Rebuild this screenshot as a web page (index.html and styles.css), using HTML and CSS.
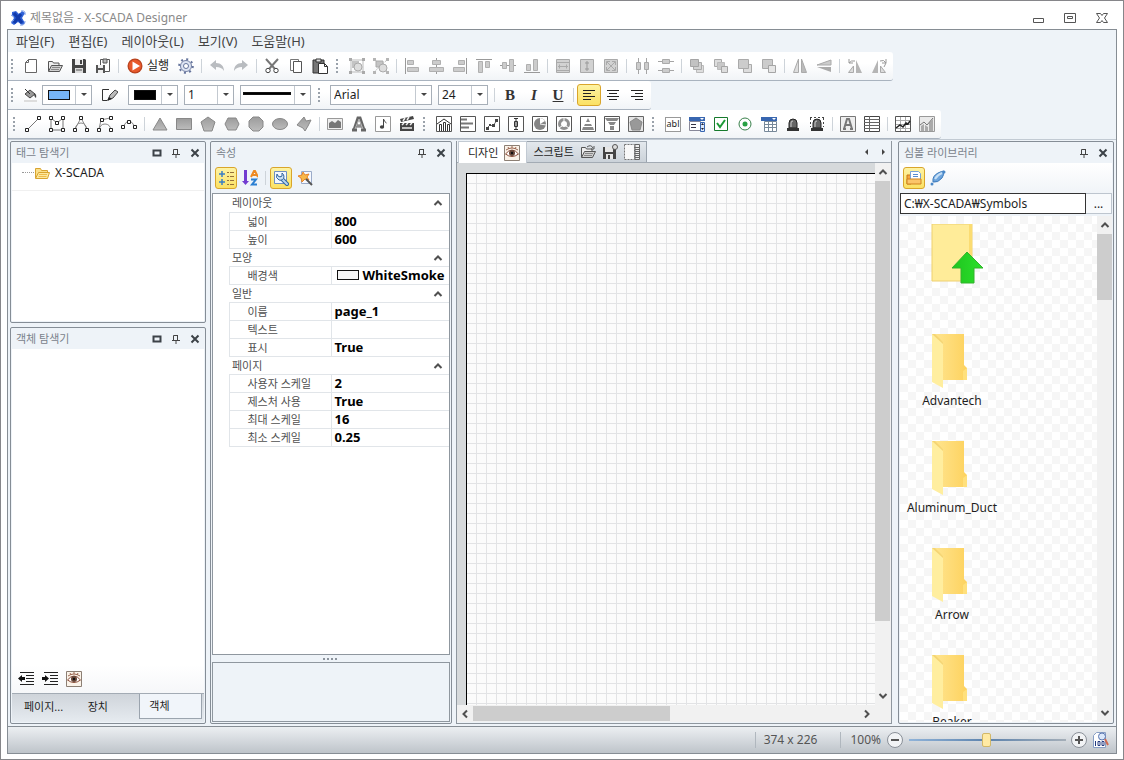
FILE: index.html
```html
<!DOCTYPE html>
<html lang="ko">
<head>
<meta charset="utf-8">
<title>제목없음 - X-SCADA Designer</title>
<link rel="stylesheet" href="styles.css">
</head>
<body>
<svg class="sprite" aria-hidden="true">
<defs>
<linearGradient id="gFold" x1="0" x2="1"><stop offset="0" stop-color="#ffe692"/><stop offset="1" stop-color="#fdd25f"/></linearGradient>
<linearGradient id="gGreen" x1="0" x2="1"><stop offset="0" stop-color="#1fc51f"/><stop offset="1" stop-color="#2ce02c"/></linearGradient>
<linearGradient id="gGray" x1="0" x2="0" y1="0" y2="1"><stop offset="0" stop-color="#9c9c9c"/><stop offset="1" stop-color="#bcbcbc"/></linearGradient>
</defs>
<symbol id="logo" viewBox="0 0 16 16"><path d="M2 2l4-1 3 3 3-3 3 2-3 5 3 5-3 2-4-3-4 3-3-2 3-5-2-3z" fill="#2f62d8"/><path d="M4 3l8 10M11 4l-7 9" stroke="#123bab" stroke-width="3"/><path d="M11 1q5-1 4 4M15 11q0 5-5 4M1 5l3 2M1 12l3-2" fill="none" stroke="#7fa0e8"/></symbol>
<symbol id="new" viewBox="0 0 16 16"><path d="M5.500 1.500h8v13h-11v-10z" fill="#fff" stroke="#666"/><path d="M5.500 1.500v3h-3" fill="none" stroke="#666"/></symbol>
<symbol id="open" viewBox="0 0 16 16"><path d="M1.500 13V3.500h4l1 1.500h5.500v2" fill="#eee" stroke="#555"/><path d="M1.500 13.500l3-6h11l-3 6z" fill="#d0d0d0" stroke="#555"/><path d="M5 9.500h8M4 11.500h8" stroke="#888"/></symbol>
<symbol id="save" viewBox="0 0 16 16"><path d="M1 1h13l1 1v13H1z" fill="#444"/><path d="M4 1h8v6H4z" fill="#eee"/><path d="M9 2h2v4H9z" fill="#444"/><path d="M4 10h8v5H4z" fill="#ddd"/><path d="M5 12h6" stroke="#555"/></symbol>
<symbol id="saveall" viewBox="0 0 16 16"><path d="M5.500 1.500h9v12h-9z" fill="#fff" stroke="#555"/><path d="M8 1h4v4H8z" fill="#bbb" stroke="#555"/><path d="M1 7h9v8H1z" fill="#555"/><path d="M3 7h5v3H3zM3 12h5v3H3z" fill="#eee"/></symbol>
<symbol id="run" viewBox="0 0 16 16"><circle cx="8" cy="8" r="7.500" fill="#b8431f"/><circle cx="8" cy="8" r="6.200" fill="#e8592b"/><path d="M5.500 3.500L13 8l-7.500 4.500z" fill="#fff"/></symbol>
<symbol id="gear" viewBox="0 0 16 16"><circle cx="8" cy="8" r="5.500" fill="#dde4f2" stroke="#7683a6"/><circle cx="8" cy="8" r="6.800" fill="none" stroke="#65749c" stroke-width="2" stroke-dasharray="2 3.340"/><circle cx="8" cy="8" r="2.500" fill="#fff" stroke="#65749c"/></symbol>
<symbol id="undo" viewBox="0 0 16 16"><path d="M1 7l6-5v3c5 0 8 3 8 8-2-3-4-4-8-4v3z" fill="#b9bcc0"/></symbol>
<symbol id="redo" viewBox="0 0 16 16"><path d="M15 7L9 2v3c-5 0-8 3-8 8 2-3 4-4 8-4v3z" fill="#b9bcc0"/></symbol>
<symbol id="cut" viewBox="0 0 16 16"><path d="M2 1l9 10M14 1L5 11" stroke="#777" stroke-width="2"/><circle cx="4" cy="12.500" r="2.200" fill="#fff" stroke="#444"/><circle cx="12" cy="12.500" r="2.200" fill="#fff" stroke="#444"/></symbol>
<symbol id="copy" viewBox="0 0 16 16"><path d="M2.500 1.500h8v11h-8z" fill="#fff" stroke="#777"/><path d="M5.500 3.500h8v11h-8z" fill="#fff" stroke="#555"/></symbol>
<symbol id="paste" viewBox="0 0 16 16"><path d="M1 2h11v13H1z" fill="#777" stroke="#333"/><path d="M4 1h5v3H4z" fill="#ddd" stroke="#333"/><path d="M6.500 5.500h6l3 3v7h-9z" fill="#fff" stroke="#333"/><path d="M12.500 5.500v3h3" fill="none" stroke="#333"/></symbol>
<symbol id="group" viewBox="0 0 16 16"><path d="M2 2h12v12H2z" fill="none" stroke="#bbb"/><path d="M3 3h7v7H3z" fill="#c4c4c4"/><circle cx="9" cy="9" r="4" fill="#ddd" stroke="#aaa"/><path d="M0 0h3v3H0zM13 0h3v3h-3zM0 13h3v3H0zM13 13h3v3h-3z" fill="#aaa"/></symbol>
<symbol id="ungroup" viewBox="0 0 16 16"><path d="M1 1l14 13M1 14L15 1" stroke="#c0c0c0" stroke-dasharray="2 1"/><path d="M3 3h7v6H3z" fill="#c4c4c4" stroke="#aaa"/><circle cx="10" cy="10" r="4" fill="#ddd" stroke="#aaa"/><path d="M0 0h3v3H0zM13 0h3v3h-3zM0 13h3v3H0zM13 13h3v3h-3z" fill="#b5b5b5"/></symbol>
<symbol id="al" viewBox="0 0 16 16"><path d="M1.500 0v16" stroke="#999"/><path d="M3.500 2.500h6v4h-6zM3.500 9.500h11v4h-11z" fill="#ccc" stroke="#b0b0b0"/></symbol>
<symbol id="ac" viewBox="0 0 16 16"><path d="M8.500 0v16" stroke="#999"/><path d="M4.500 2.500h8v4h-8zM1.500 9.500h14v4h-14z" fill="#ccc" stroke="#b0b0b0"/></symbol>
<symbol id="ar" viewBox="0 0 16 16"><path d="M14.500 0v16" stroke="#999"/><path d="M6.500 2.500h6v4h-6zM1.500 9.500h11v4h-11z" fill="#ccc" stroke="#b0b0b0"/></symbol>
<symbol id="at" viewBox="0 0 16 16"><path d="M0 1.500h16" stroke="#999"/><path d="M2.500 3.500h4v11h-4zM9.500 3.500h4v6h-4z" fill="#ccc" stroke="#b0b0b0"/></symbol>
<symbol id="am" viewBox="0 0 16 16"><path d="M0 7.500h16" stroke="#999"/><path d="M2.500 4.500h4v6h-4zM9.500 1.500h4v12h-4z" fill="#ccc" stroke="#b0b0b0"/></symbol>
<symbol id="ab" viewBox="0 0 16 16"><path d="M0 14.500h16" stroke="#999"/><path d="M2.500 6.500h4v6h-4zM9.500 1.500h4v11h-4z" fill="#ccc" stroke="#b0b0b0"/></symbol>
<symbol id="sw" viewBox="0 0 16 16"><path d="M1.500 1.500h13v13h-13z" fill="#d2d2d2" stroke="#aaa"/><path d="M3 8.500h10M4.500 6.500v4M11.500 6.500v4M2 4.500h12M2 12.500h12" stroke="#aaa"/></symbol>
<symbol id="sh" viewBox="0 0 16 16"><path d="M1.500 1.500h13v13h-13z" fill="#d2d2d2" stroke="#aaa"/><path d="M8 3v10M6 5h4M6 11h4" stroke="#999"/></symbol>
<symbol id="sb" viewBox="0 0 16 16"><path d="M1.500 1.500h13v13h-13z" fill="#d2d2d2" stroke="#aaa"/><path d="M4 4l8 8M12 4l-8 8M3.500 7V3.500H7M9 3.500h3.500V7M3.500 9v3.500H7M12.500 9v3.500H9" fill="none" stroke="#aaa"/></symbol>
<symbol id="dh" viewBox="0 0 16 16"><path d="M4.500 0v16M12.500 0v16" stroke="#a5a5a5"/><path d="M2.500 4.500h4v7h-4zM10.500 4.500h4v7h-4z" fill="#ccc" stroke="#aaa"/></symbol>
<symbol id="dv" viewBox="0 0 16 16"><path d="M0 3.500h16M0 12.500h16" stroke="#a5a5a5"/><path d="M4.500 1.500h7v4h-7zM4.500 10.500h7v4h-7z" fill="#ccc" stroke="#aaa"/></symbol>
<symbol id="front" viewBox="0 0 16 16"><path d="M7.500 7.500h7v7h-7z" fill="#ddd" stroke="#bbb"/><path d="M4.500 4.500h8v7h-8z" fill="#d2d2d2" stroke="#aaa"/><path d="M1.500 1.500h8v7h-8z" fill="#c2c2c2" stroke="#a5a5a5"/></symbol>
<symbol id="back" viewBox="0 0 16 16"><path d="M1.500 1.500h7v7h-7z" fill="#ddd" stroke="#aaa"/><path d="M4.500 4.500h7v7h-7z" fill="#c8c8c8" stroke="#bbb"/><path d="M8.500 8.500h6v6h-6z" fill="#ddd" stroke="#a5a5a5"/></symbol>
<symbol id="fwd" viewBox="0 0 16 16"><path d="M6.500 6.500h8v8h-8z" fill="#ddd" stroke="#aaa"/><path d="M1.500 1.500h10v9h-10z" fill="#ccc" stroke="#aaa"/></symbol>
<symbol id="bwd" viewBox="0 0 16 16"><path d="M1.500 1.500h10v9h-10z" fill="#ccc" stroke="#aaa"/><path d="M7.500 7.500h7v7h-7z" fill="#e6e6e6" stroke="#a5a5a5"/></symbol>
<symbol id="fliph" viewBox="0 0 16 16"><path d="M6.500 1v13.500h-5z" fill="#ddd" stroke="#aaa"/><path d="M9.500 1v13.500h5z" fill="#bbb" stroke="#aaa"/></symbol>
<symbol id="flipv" viewBox="0 0 16 16"><path d="M15 2v5H1z" fill="#ccc" stroke="#aaa"/><path d="M15 14V9H1z" fill="#aaa"/></symbol>
<symbol id="rotl" viewBox="0 0 16 16"><path d="M1.500 14.500h5V8z" fill="#ddd" stroke="#aaa"/><path d="M9 15V2l6 13z" fill="#b5b5b5"/><path d="M2 5q2-3 6-2M2 1v4h4" fill="none" stroke="#999"/></symbol>
<symbol id="rotr" viewBox="0 0 16 16"><path d="M1 15L7 2v13z" fill="#b5b5b5"/><path d="M9.500 8v6.500h5z" fill="#ddd" stroke="#aaa"/><path d="M9 3q4-2 6 2l-2 4M15 1v4h-4" fill="none" stroke="#999"/></symbol>
<symbol id="fill" viewBox="0 0 16 16"><path d="M3 7l5-4 5 4-5 4z" fill="#999" stroke="#444"/><path d="M3 2l5 5" stroke="#333"/><path d="M12 6q3 1 2 5-2-1-2-5z" fill="#444"/><path d="M2 14h13" stroke="#ddd" stroke-width="2"/></symbol>
<symbol id="pen" viewBox="0 0 16 16"><path d="M7 2.500H.500v11H5" fill="none" stroke="#333"/><path d="M6 13l2-5 5-5 3 2-5 6z" fill="#bbb" stroke="#444"/><path d="M5 14l2-4 3 2z" fill="#222"/></symbol>
<symbol id="left" viewBox="0 0 16 16"><path d="M2 3.500h12M2 6.500h8M2 9.500h12M2 12.500h8" stroke="#222"/></symbol>
<symbol id="center" viewBox="0 0 16 16"><path d="M2 3.500h12M4 6.500h8M2 9.500h12M4 12.500h8" stroke="#222"/></symbol>
<symbol id="right" viewBox="0 0 16 16"><path d="M2 3.500h12M6 6.500h8M2 9.500h12M6 12.500h8" stroke="#222"/></symbol>
<symbol id="line" viewBox="0 0 16 16"><path d="M2 14L14 2" stroke="#777"/><path d="M.500 12.500h3v3h-3zM12.500.500h3v3h-3z" fill="#fff" stroke="#222"/></symbol>
<symbol id="poly" viewBox="0 0 16 16"><path d="M2 2l6 5 6-5v12H2z" fill="none" stroke="#777"/><path d="M.500.500h3v3h-3zM12.500.500h3v3h-3zM.500 12.500h3v3h-3zM12.500 12.500h3v3h-3zM6.500 5.500h3v3h-3z" fill="#fff" stroke="#222"/></symbol>
<symbol id="curve" viewBox="0 0 16 16"><path d="M2 14Q3 7 8 7t6 7M8 2L2 13M8 2l6 11" fill="none" stroke="#888"/><path d="M.500 12.500h3v3h-3zM12.500 12.500h3v3h-3zM6.500.500h3v3h-3z" fill="#fff" stroke="#222"/></symbol>
<symbol id="bez" viewBox="0 0 16 16"><path d="M2 14Q3 8 8 8t6 6M4 4l9-2M4 4L2 13" fill="none" stroke="#888"/><path d="M.500 12.500h3v3h-3zM12.500 12.500h3v3h-3zM12.500.500h3v3h-3zM3.500 2.500h3v3h-3z" fill="#fff" stroke="#222"/></symbol>
<symbol id="arc" viewBox="0 0 16 16"><path d="M2 11q6-12 12 0" fill="none" stroke="#888"/><path d="M.500 9.500h3v3h-3zM12.500 9.500h3v3h-3zM6.500 4.500h3v3h-3z" fill="#fff" stroke="#222"/></symbol>
<symbol id="tri" viewBox="0 0 16 16"><path d="M8 2l7 12H1z" fill="url(#gGray)" stroke="#888"/></symbol>
<symbol id="rect" viewBox="0 0 16 16"><path d="M.500 2.500h15v11H.500z" fill="url(#gGray)" stroke="#888"/></symbol>
<symbol id="pent" viewBox="0 0 16 16"><path d="M8 1l7 5-3 9H4L1 6z" fill="url(#gGray)" stroke="#888"/></symbol>
<symbol id="hex" viewBox="0 0 16 16"><path d="M4 2h8l3 6-3 6H4L1 8z" fill="url(#gGray)" stroke="#888"/></symbol>
<symbol id="oct" viewBox="0 0 16 16"><path d="M5 1h6l4 4v6l-4 4H5l-4-4V5z" fill="url(#gGray)" stroke="#888"/></symbol>
<symbol id="ell" viewBox="0 0 16 16"><ellipse cx="8" cy="8" rx="7.500" ry="5.500" fill="url(#gGray)" stroke="#888"/></symbol>
<symbol id="free" viewBox="0 0 16 16"><path d="M1 9l7-8 2 4 5-1-3 6-3 5-2-3z" fill="url(#gGray)" stroke="#888"/></symbol>
<symbol id="img" viewBox="0 0 16 16"><path d="M.500 2.500h15v11H.500z" fill="#eee" stroke="#999"/><path d="M2 12V7l3-2 3 2 3-3 3 2v6z" fill="#777"/></symbol>
<symbol id="letter" viewBox="0 0 16 16"><path d="M1 14h5M10 14h5M3 14L7 2h2l4 12M5 10h6" fill="none" stroke="#666" stroke-width="3"/><path d="M4 13L8 3l4 10M6 10h5" fill="none" stroke="#b5b5b5"/></symbol>
<symbol id="note" viewBox="0 0 16 16"><path d="M.500.500h15v15H.500z" fill="#fff" stroke="#999"/><ellipse cx="7" cy="11" rx="2.200" ry="1.700" fill="#444"/><path d="M8.500 11V3q1 3 3 4" fill="none" stroke="#444"/></symbol>
<symbol id="clap" viewBox="0 0 16 16"><path d="M1 7h14v8H1zM1 3l13-3 1 3L2 6z" fill="#444"/><path d="M3 9l2-2M7 9l2-2M11 9l2-2M4 5l2-3M8 4l2-3M3 12h10" stroke="#eee" stroke-width="1.500"/></symbol>
<symbol id="frame" viewBox="0 0 16 16"><path d="M.500.500h15v15H.500z" fill="#fff" stroke="#555"/></symbol>
<symbol id="c1" viewBox="0 0 16 16"><use href="#frame"/><path d="M3.500 15V8.500h2V15M7.500 15V6.500h2V15M11.500 15V8.500h2V15M1 8l7-5 7 5" fill="none" stroke="#333"/></symbol>
<symbol id="c2" viewBox="0 0 16 16"><use href="#frame"/><path d="M1 3.500h6M1 7.500h12M1 11.500h8" stroke="#777" stroke-width="2"/></symbol>
<symbol id="c3" viewBox="0 0 16 16"><use href="#frame"/><path d="M3 12l3-3 3 1 4-6" fill="none" stroke="#666"/><path d="M2 11h3v3H2zM5 8h2v2H5zM8 8h3v3H8zM11 3h3v3h-3z" fill="#444"/></symbol>
<symbol id="c4" viewBox="0 0 16 16"><use href="#frame"/><path d="M8 2v12M6 2.500h4M6 13.500h4" stroke="#333"/><path d="M6.500 5.500h3v5h-3z" fill="#999" stroke="#333"/></symbol>
<symbol id="c5" viewBox="0 0 16 16"><use href="#frame"/><circle cx="8" cy="8" r="6" fill="#858585"/><path d="M8 8V2a6 6 0 0 1 5 3z" fill="#fff"/><path d="M8 8l6 1" stroke="#eee"/></symbol>
<symbol id="c6" viewBox="0 0 16 16"><use href="#frame"/><circle cx="8" cy="8" r="4.500" fill="none" stroke="#909090" stroke-width="3"/><path d="M8 1v4M3 12l3-2M13 12l-3-2" stroke="#fff"/></symbol>
<symbol id="c7" viewBox="0 0 16 16"><use href="#frame"/><path d="M8 2l2 4H6zM5 8h6l1 2H4zM3 11h10l1 3H2z" fill="#888"/></symbol>
<symbol id="c8" viewBox="0 0 16 16"><use href="#frame"/><path d="M1 2h14l-2 3H3zM4 6h8l-2 3H6zM6 10h4v4H6z" fill="#888"/></symbol>
<symbol id="c9" viewBox="0 0 16 16"><path d="M.500.500h15v15H.500z" fill="#e6e6e6" stroke="#666"/><path d="M8 2l6 4-2 8H4L2 6z" fill="#999" stroke="#888"/></symbol>
<symbol id="combo" viewBox="0 0 16 16"><path d="M0 1h16v4H0z" fill="#3866b0"/><path d="M11 2h4l-2 2z" fill="#fff"/><path d="M.500 5.500h11v9H.500z" fill="#fff" stroke="#889"/><path d="M2 8.500h5M2 11.500h5" stroke="#334"/><path d="M11.500 6.500h4v9h-4z" fill="#dce8fa" stroke="#3866b0"/><path d="M12 9l1.500-2L15 9zM12 12l1.500 2 1.500-2z" fill="#223"/></symbol>
<symbol id="check" viewBox="0 0 16 16"><path d="M1.500 1.500h13v13h-13z" fill="#fff" stroke="#167a2c"/><path d="M4 7l3 4 5-7" fill="none" stroke="#1b9a36" stroke-width="2"/></symbol>
<symbol id="radio" viewBox="0 0 16 16"><circle cx="8" cy="8" r="6" fill="#fff" stroke="#38804a"/><circle cx="8" cy="8" r="2.500" fill="#27a143"/></symbol>
<symbol id="cal" viewBox="0 0 16 16"><path d="M0 1h16v4H0z" fill="#3866b0"/><path d="M11 2h4l-2 2z" fill="#fff"/><path d="M3.500 5.500h12v10h-12z" fill="#fff" stroke="#789"/><path d="M4 8.500h11M4 11.500h11M7.500 6v9M11.500 6v9" stroke="#789"/></symbol>
<symbol id="alarm" viewBox="0 0 16 16"><path d="M4 12V7q0-4 4-4t4 4v5z" fill="#666" stroke="#222"/><path d="M6 11V7q0-2 2-2" fill="none" stroke="#ccc"/><path d="M2 12h12v3H2z" fill="#333"/></symbol>
<symbol id="alarm2" viewBox="0 0 16 16"><use href="#alarm"/><path d="M1 1.500h14M1.500 2v9M14.500 2v9" stroke="#444" stroke-dasharray="2 2"/></symbol>
<symbol id="aframe" viewBox="0 0 16 16"><path d="M.500.500h15v15H.500z" fill="#eee" stroke="#777"/><path d="M4 13L7 3h2l3 10M5 9h6M3 13h3M10 13h3" fill="none" stroke="#777" stroke-width="2"/></symbol>
<symbol id="table" viewBox="0 0 16 16"><path d="M.500.500h15v15H.500z" fill="#fff" stroke="#444"/><path d="M0 3.500h16M0 6.500h16M0 9.500h16M0 12.500h16M5.500 0v16" stroke="#666"/></symbol>
<symbol id="trend" viewBox="0 0 16 16"><use href="#frame"/><path d="M1 4.500h14M1 8.500h14M1 12.500h14M5.500 1v14M10.500 1v14" stroke="#aaa"/><path d="M1 12l4-3 3 2 3-4 2 1 2-3" fill="none" stroke="#222" stroke-width="1.500"/></symbol>
<symbol id="trend2" viewBox="0 0 16 16"><path d="M.500.500h15v15H.500z" fill="#eaeaea" stroke="#999"/><path d="M2 15v-5l3-2v7zM6 15V9l3 2v4zM10 15V7l4-4v12z" fill="#aaa"/><path d="M1 9l4-3 3 3 6-7" fill="none" stroke="#777"/></symbol>
<symbol id="max" viewBox="0 0 10 10"><path d="M1.500 2.500h7v5h-7z" fill="none" stroke="#3c4248" stroke-width="2"/></symbol>
<symbol id="pin" viewBox="0 0 10 10"><path d="M1 6.500h8M2.500 6V1.500h4V6M5 7v3" fill="none" stroke="#444"/><path d="M6 1h1v5H6z" fill="#444"/></symbol>
<symbol id="close" viewBox="0 0 10 10"><path d="M1.500 1.500l7 7M8.500 1.500l-7 7" stroke="#3c4248" stroke-width="2"/></symbol>
<symbol id="fold16" viewBox="0 0 16 16"><path d="M1.500 13V3.500h5l1 2h6V8" fill="#fbe08a" stroke="#d8a431"/><path d="M1.500 13.500l3-6h11l-2 6z" fill="#fde9a0" stroke="#d8a431"/><path d="M5 9.500h8M4.500 11.500h8" stroke="#eebc4c"/></symbol>
<symbol id="cat" viewBox="0 0 16 16"><path d="M1 4h6M4 1v6M1 12h6M4 9v6" stroke="#3a7fc4" stroke-width="1.500"/><path d="M9 2.500h2M9 6.500h2M9 10.500h2M9 14.500h2M12 2.500h4M12 6.500h4M12 10.500h4M12 14.500h4" stroke="#96703a"/></symbol>
<symbol id="az" viewBox="0 0 16 16"><path d="M2 0h3v11h2l-3.500 4L0 11h2z" fill="#713bd0"/><path d="M9 7l3-6h1l3 6M10 5h5" fill="none" stroke="#ee8a24" stroke-width="2"/><path d="M9 9.500h5l-4 5h5" fill="none" stroke="#2b7fd2" stroke-width="2"/></symbol>
<symbol id="wrench" viewBox="0 0 16 16"><path d="M1.500 1.500h12v12h-12z" fill="#f4f8ff" stroke="#7090c0"/><path d="M8 8l6 6" stroke="#34679e" stroke-width="4" stroke-linecap="round"/><path d="M8 8l6 6" stroke="#b8d4f0" stroke-width="2" stroke-linecap="round"/><path d="M4 4q-2 4 2 6 4 1 5-3 0-3-2-4v3l-2 1-2-1z" fill="#cce1f6" stroke="#34679e"/></symbol>
<symbol id="star" viewBox="0 0 16 16"><path d="M4.500 1.500h10v12h-10z" fill="#f6f9ff" stroke="#9babc9"/><path d="M6 2l2 3 4-1-2 3 2 3-4-1-3 3-1-4-3-2 4-1z" fill="#f8b84a" stroke="#e8842a"/><path d="M9 9l6 6" stroke="#555" stroke-width="2"/></symbol>
<symbol id="eye" viewBox="0 0 16 16"><path d="M.500.500h15v15H.500z" fill="#fbf3e9" stroke="#8c7f74"/><path d="M1.500 9Q8 1 14.500 9 8 14 1.500 9z" fill="#fff" stroke="#8a4b36"/><circle cx="8" cy="8" r="3" fill="#674638"/><circle cx="8" cy="8" r="1.200" fill="#111"/><path d="M2 5q6-4 12 0M4 2l1 2M8 1v2M12 2l-1 2" fill="none" stroke="#9b6650"/></symbol>
<symbol id="openx" viewBox="0 0 16 16"><use href="#open"/><path d="M7 3q4-3 6 1M14 2v3h-3" fill="none" stroke="#555"/></symbol>
<symbol id="savex" viewBox="0 0 16 16"><path d="M1 3h13v12H1z" fill="#444"/><path d="M3 3h8v5H3zM4 10h7v5H4z" fill="#e6e6e6"/><path d="M6 11h2v4H6z" fill="#444"/><circle cx="13" cy="3" r="2.500" fill="#ddd" stroke="#555"/></symbol>
<symbol id="ruler" viewBox="0 0 16 16"><path d="M.500.500h10v15H.500z" fill="#f8f8f8" stroke="#777" stroke-dasharray="2 1"/><path d="M11 .500h4.500v15H11z" fill="#eee" stroke="#666"/><path d="M11 3.500h4M11 5.500h4M11 7.500h4M11 9.500h4M11 11.500h4M11 13.500h4" stroke="#666"/></symbol>
<symbol id="indl" viewBox="0 0 16 16"><path d="M2 1.500h14M8 4.500h8M8 7.500h8M8 10.500h8M2 13.500h14" stroke="#222"/><path d="M0 7.500L4 4v2h3v3H4v2z" fill="#111"/></symbol>
<symbol id="indr" viewBox="0 0 16 16"><path d="M2 1.500h14M8 4.500h8M8 7.500h8M8 10.500h8M2 13.500h14" stroke="#222"/><path d="M7 7.500L3 4v2H0v3h3v2z" fill="#111"/></symbol>
<symbol id="lib" viewBox="0 0 16 16"><path d="M1 5h4v9H1z" fill="#f5a440" stroke="#c87915"/><path d="M4.500 1.500h8l2 2v8h-10z" fill="#fff" stroke="#79a2d8"/><path d="M7 4.500h5M7 6.500h5" stroke="#568bd0"/><path d="M1 9h14v5H1z" fill="#fbc56a" stroke="#cf831e"/></symbol>
<symbol id="shape" viewBox="0 0 16 16"><path d="M3 12Q2 6 8 3q4-2 6-2 0 4-2 7-4 5-9 4z" fill="#6da4dc" stroke="#3f7dbd"/><path d="M5 9q2-4 7-6" fill="none" stroke="#c5dff6" stroke-width="2"/><circle cx="2" cy="14" r="1.500" fill="#4a88c8"/><circle cx="14" cy="2" r="1.500" fill="#4a88c8"/></symbol>
<symbol id="minus" viewBox="0 0 18 18"><circle cx="9" cy="9" r="7.500" fill="#f1f3f5" stroke="#8a9098"/><path d="M5 9h8" stroke="#555" stroke-width="2"/></symbol>
<symbol id="plus" viewBox="0 0 18 18"><circle cx="9" cy="9" r="7.500" fill="#f1f3f5" stroke="#8a9098"/><path d="M5 9h8M9 5v8" stroke="#555" stroke-width="2"/></symbol>
<symbol id="z100" viewBox="0 0 16 16"><path d="M.500 3.500l3-3h9v15H.500z" fill="#fff" stroke="#889fc4"/><circle cx="9" cy="4.500" r="3.500" fill="#dbe8fa" stroke="#5976b0"/><path d="M12 7l3 6" stroke="#d06a50" stroke-width="2"/><path d="M2.500 9v5M5 9.500h2v4H5zM9 9.500h2v4H9z" fill="none" stroke="#223a80"/></symbol>
<symbol id="up" viewBox="0 0 10 10"><path d="M1.500 7L5 3.500 8.500 7" fill="none" stroke="#505050" stroke-width="2"/></symbol>
<symbol id="down" viewBox="0 0 10 10"><path d="M1.500 3L5 6.500 8.500 3" fill="none" stroke="#505050" stroke-width="2"/></symbol>
<symbol id="lt" viewBox="0 0 10 10"><path d="M7 1.500L3.500 5 7 8.500" fill="none" stroke="#505050" stroke-width="2"/></symbol>
<symbol id="gt" viewBox="0 0 10 10"><path d="M3 1.500L6.500 5 3 8.500" fill="none" stroke="#505050" stroke-width="2"/></symbol>
<symbol id="tl" viewBox="0 0 10 10"><path d="M6 2v6L3 5z" fill="#444"/></symbol>
<symbol id="tr" viewBox="0 0 10 10"><path d="M4 2v6l3-3z" fill="#444"/></symbol>
<symbol id="folder" viewBox="0 0 38 56"><path d="M1 1h32v31l3 3v12H1z" fill="url(#gFold)"/><path d="M36 35l-4 3v9h4z" fill="#ffe07c"/><path d="M1 1l11 8v46L1 49z" fill="#ffee9f"/><path d="M1 1h3l8 8v2z" fill="#f5d574"/></symbol>
<symbol id="upfolder" viewBox="0 0 54 60"><path d="M1 0h40v57H1z" fill="#ffec99" stroke="#eed070"/><path d="M38 0h3v57h-3z" fill="#fbdc72"/><path d="M36 28l16 16h-9v15H30V44h-9z" fill="url(#gGreen)" stroke="#33b32c"/></symbol>
<symbol id="wmin" viewBox="0 0 12 12"><path d="M1.500 6.500h10v4h-10z" fill="#fff" stroke="#555"/></symbol>
<symbol id="wmax" viewBox="0 0 12 12"><path d="M.500 1.500h11v9H.500z" fill="#fff" stroke="#555"/><path d="M3.500 4.500h5v2h-5z" fill="#fff" stroke="#555"/></symbol>
<symbol id="wclose" viewBox="0 0 12 12"><path d="M.500 1.500h4L6 3.500l1.500-2h4L8.500 6l3 4.500h-4L6 8.500l-1.500 2h-4l3-4.500z" fill="#fff" stroke="#555"/></symbol>
</svg>

<div class="window">
<header class="titlebar">
<svg class="i16"><use href="#logo"/></svg>
<h1>제목없음 - X-SCADA Designer</h1>
<div class="window-buttons">
<button aria-label="최소화"><svg><use href="#wmin"/></svg></button>
<button aria-label="최대화"><svg><use href="#wmax"/></svg></button>
<button aria-label="닫기"><svg><use href="#wclose"/></svg></button>
</div>
</header>

<div class="app">
<nav class="menu"><button>파일(F)</button><button>편집(E)</button><button>레이아웃(L)</button><button>보기(V)</button><button>도움말(H)</button></nav>

<div class="toolbar" role="toolbar" aria-label="표준">
<i class="grip"></i>
<button aria-label="새로 만들기"><svg><use href="#new"/></svg></button><button aria-label="열기"><svg><use href="#open"/></svg></button><button aria-label="저장"><svg><use href="#save"/></svg></button><button aria-label="모두 저장"><svg><use href="#saveall"/></svg></button>
<i class="sep"></i>
<button class="run"><svg><use href="#run"/></svg>실행</button><button aria-label="설정"><svg><use href="#gear"/></svg></button>
<i class="sep"></i>
<button aria-label="실행 취소"><svg><use href="#undo"/></svg></button><button aria-label="다시 실행"><svg><use href="#redo"/></svg></button>
<i class="sep"></i>
<button aria-label="잘라내기"><svg><use href="#cut"/></svg></button><button aria-label="복사"><svg><use href="#copy"/></svg></button><button aria-label="붙여넣기"><svg><use href="#paste"/></svg></button>
<i class="grip"></i>
<button aria-label="그룹"><svg><use href="#group"/></svg></button><button aria-label="그룹 해제"><svg><use href="#ungroup"/></svg></button>
<i class="sep"></i>
<button aria-label="왼쪽 맞춤"><svg><use href="#al"/></svg></button><button aria-label="가운데 맞춤"><svg><use href="#ac"/></svg></button><button aria-label="오른쪽 맞춤"><svg><use href="#ar"/></svg></button><button aria-label="위쪽 맞춤"><svg><use href="#at"/></svg></button><button aria-label="중간 맞춤"><svg><use href="#am"/></svg></button><button aria-label="아래쪽 맞춤"><svg><use href="#ab"/></svg></button>
<i class="sep"></i>
<button aria-label="같은 너비"><svg><use href="#sw"/></svg></button><button aria-label="같은 높이"><svg><use href="#sh"/></svg></button><button aria-label="같은 크기"><svg><use href="#sb"/></svg></button>
<i class="sep"></i>
<button aria-label="가로 간격"><svg><use href="#dh"/></svg></button><button aria-label="세로 간격"><svg><use href="#dv"/></svg></button>
<i class="sep"></i>
<button aria-label="맨 앞으로"><svg><use href="#front"/></svg></button><button aria-label="맨 뒤로"><svg><use href="#back"/></svg></button><button aria-label="앞으로"><svg><use href="#fwd"/></svg></button><button aria-label="뒤로"><svg><use href="#bwd"/></svg></button>
<i class="sep"></i>
<button aria-label="좌우 대칭"><svg><use href="#fliph"/></svg></button><button aria-label="상하 대칭"><svg><use href="#flipv"/></svg></button>
<i class="sep"></i>
<button aria-label="왼쪽 회전"><svg><use href="#rotl"/></svg></button><button aria-label="오른쪽 회전"><svg><use href="#rotr"/></svg></button>
</div>

<div class="toolbar format" role="toolbar" aria-label="서식">
<i class="grip"></i>
<button aria-label="채우기"><svg><use href="#fill"/></svg></button>
<span class="combo"><select aria-label="채우기 색"><option aria-label="파랑"></option></select><i class="swatch blue"></i></span>
<button class="pen" aria-label="선 색"><svg><use href="#pen"/></svg></button>
<span class="combo"><select aria-label="선 색상"><option aria-label="검정"></option></select><i class="swatch black"></i></span>
<span class="combo spaced"><select aria-label="선 두께"><option>1</option></select></span>
<span class="combo spaced stroke"><select aria-label="선 종류"><option aria-label="실선"></option></select><i class="swatch rule"></i></span>
<i class="grip wide"></i>
<span class="combo font"><select aria-label="글꼴"><option>Arial</option></select></span>
<span class="combo spaced"><select aria-label="글꼴 크기"><option>24</option></select></span>
<i class="sep wide"></i>
<button class="letter"><b>B</b></button><button class="letter"><em>I</em></button><button class="letter"><u>U</u></button>
<i class="sep"></i>
<button class="on" aria-label="왼쪽 정렬" aria-pressed="true"><svg><use href="#left"/></svg></button><button aria-label="가운데 정렬"><svg><use href="#center"/></svg></button><button aria-label="오른쪽 정렬"><svg><use href="#right"/></svg></button>
</div>

<div class="toolbar" role="toolbar" aria-label="그리기">
<i class="grip wide"></i>
<button aria-label="선"><svg><use href="#line"/></svg></button><button aria-label="다각선"><svg><use href="#poly"/></svg></button><button aria-label="곡선"><svg><use href="#curve"/></svg></button><button aria-label="베지어"><svg><use href="#bez"/></svg></button><button aria-label="호"><svg><use href="#arc"/></svg></button>
<i class="sep"></i>
<button aria-label="삼각형"><svg><use href="#tri"/></svg></button><button aria-label="사각형"><svg><use href="#rect"/></svg></button><button aria-label="오각형"><svg><use href="#pent"/></svg></button><button aria-label="육각형"><svg><use href="#hex"/></svg></button><button aria-label="팔각형"><svg><use href="#oct"/></svg></button><button aria-label="타원"><svg><use href="#ell"/></svg></button><button aria-label="자유형"><svg><use href="#free"/></svg></button>
<i class="sep"></i>
<button aria-label="그림"><svg><use href="#img"/></svg></button><button aria-label="텍스트"><svg><use href="#letter"/></svg></button><button aria-label="소리"><svg><use href="#note"/></svg></button><button aria-label="동영상"><svg><use href="#clap"/></svg></button>
<i class="grip"></i>
<button aria-label="막대 차트"><svg><use href="#c1"/></svg></button><button aria-label="가로 막대 차트"><svg><use href="#c2"/></svg></button><button aria-label="분산형 차트"><svg><use href="#c3"/></svg></button><button aria-label="상자 차트"><svg><use href="#c4"/></svg></button><button aria-label="원형 차트"><svg><use href="#c5"/></svg></button><button aria-label="도넛 차트"><svg><use href="#c6"/></svg></button><button aria-label="피라미드"><svg><use href="#c7"/></svg></button><button aria-label="깔때기"><svg><use href="#c8"/></svg></button><button aria-label="방사형"><svg><use href="#c9"/></svg></button>
<i class="grip"></i>
<button aria-label="입력 상자"><span class="abl">abl</span></button><button aria-label="콤보 상자"><svg><use href="#combo"/></svg></button><button aria-label="확인란"><svg><use href="#check"/></svg></button><button aria-label="라디오"><svg><use href="#radio"/></svg></button><button aria-label="날짜"><svg><use href="#cal"/></svg></button><button aria-label="경보"><svg><use href="#alarm"/></svg></button><button aria-label="경보 요약"><svg><use href="#alarm2"/></svg></button>
<i class="sep"></i>
<button aria-label="레이블"><svg><use href="#aframe"/></svg></button><button aria-label="표"><svg><use href="#table"/></svg></button>
<i class="sep"></i>
<button aria-label="트렌드"><svg><use href="#trend"/></svg></button><button aria-label="이력 트렌드"><svg><use href="#trend2"/></svg></button>
</div>

<main class="workspace">
<div class="explorers">
<section class="panel tags">
<header><h2>태그 탐색기</h2><button aria-label="최대화"><svg><use href="#max"/></svg></button><button aria-label="고정"><svg><use href="#pin"/></svg></button><button aria-label="닫기"><svg><use href="#close"/></svg></button></header>
<div class="tree"><div class="node"><i></i><svg class="i16"><use href="#fold16"/></svg><span>X-SCADA</span></div></div>
</section>
<section class="panel objects">
<header><h2>객체 탐색기</h2><button aria-label="최대화"><svg><use href="#max"/></svg></button><button aria-label="고정"><svg><use href="#pin"/></svg></button><button aria-label="닫기"><svg><use href="#close"/></svg></button></header>
<div class="blank"></div>
<div class="tools"><button aria-label="내어쓰기"><svg><use href="#indl"/></svg></button><button aria-label="들여쓰기"><svg><use href="#indr"/></svg></button><button aria-label="보기"><svg><use href="#eye"/></svg></button></div>
<div class="bottom-tabs"><button>페이지...</button><button>장치</button><button class="active">객체</button></div>
</section>
</div>

<section class="panel props">
<header><h2>속성</h2><button aria-label="고정"><svg><use href="#pin"/></svg></button><button aria-label="닫기"><svg><use href="#close"/></svg></button></header>
<div class="mini"><button class="on" aria-label="항목별"><svg><use href="#cat"/></svg></button><button aria-label="사전순"><svg><use href="#az"/></svg></button><i class="sep"></i><button class="on" aria-label="속성"><svg><use href="#wrench"/></svg></button><button aria-label="이벤트"><svg><use href="#star"/></svg></button></div>
<div class="sheet">
<table>
<colgroup><col class="c-gutter"><col class="c-name"><col></colgroup>
<tbody>
<tr class="cat"><td></td><th colspan="2">레이아웃<svg><use href="#up"/></svg></th></tr>
<tr><td></td><th>넓이</th><td>800</td></tr>
<tr><td></td><th>높이</th><td>600</td></tr>
<tr class="cat"><td></td><th colspan="2">모양<svg><use href="#up"/></svg></th></tr>
<tr><td></td><th>배경색</th><td><i class="color"></i>WhiteSmoke</td></tr>
<tr class="cat"><td></td><th colspan="2">일반<svg><use href="#up"/></svg></th></tr>
<tr><td></td><th>이름</th><td>page_1</td></tr>
<tr><td></td><th>텍스트</th><td></td></tr>
<tr><td></td><th>표시</th><td>True</td></tr>
<tr class="cat"><td></td><th colspan="2">페이지<svg><use href="#up"/></svg></th></tr>
<tr><td></td><th>사용자 스케일</th><td>2</td></tr>
<tr><td></td><th>제스처 사용</th><td>True</td></tr>
<tr><td></td><th>최대 스케일</th><td>16</td></tr>
<tr><td></td><th>최소 스케일</th><td>0.25</td></tr>
</tbody>
</table>
</div>
<div class="splitter"><i></i></div>
<div class="describe"></div>
</section>

<section class="editor">
<div class="tabs">
<button class="tab active">디자인<svg><use href="#eye"/></svg></button>
<button class="tab">스크립트<svg><use href="#openx"/></svg><svg><use href="#savex"/></svg><svg><use href="#ruler"/></svg></button>
<span class="arrows"><button aria-label="이전"><svg><use href="#tl"/></svg></button><button aria-label="다음"><svg><use href="#tr"/></svg></button></span>
</div>
<div class="stage">
<div class="view"><div class="page"></div></div>
<div class="vbar"><svg><use href="#up"/></svg><div class="track"><i></i></div><svg><use href="#down"/></svg></div>
<div class="hbar"><svg><use href="#lt"/></svg><div class="track"><i></i></div><svg><use href="#gt"/></svg></div>
</div>
</section>

<section class="panel library">
<header><h2>심볼 라이브러리</h2><button aria-label="고정"><svg><use href="#pin"/></svg></button><button aria-label="닫기"><svg><use href="#close"/></svg></button></header>
<div class="mini white"><button class="on" aria-label="라이브러리"><svg><use href="#lib"/></svg></button><button aria-label="도형"><svg><use href="#shape"/></svg></button></div>
<div class="path"><input type="text" aria-label="경로" value="C:₩X-SCADA₩Symbols"><button>...</button></div>
<div class="browse">
<ul>
<li class="parent"><svg><use href="#upfolder"/></svg></li>
<li><svg><use href="#folder"/></svg><span>Advantech</span></li>
<li><svg><use href="#folder"/></svg><span>Aluminum_Duct</span></li>
<li><svg><use href="#folder"/></svg><span>Arrow</span></li>
<li><svg><use href="#folder"/></svg><span>Beaker</span></li>
</ul>
<div class="vbar"><svg><use href="#up"/></svg><div class="track"><i></i></div><svg><use href="#down"/></svg></div>
</div>
</section>
</main>

<footer class="status">
<span class="size">374 x 226</span>
<label for="zoom">100%</label>
<button aria-label="축소"><svg><use href="#minus"/></svg></button>
<input id="zoom" type="range" min="0" max="100" value="49">
<button aria-label="확대"><svg><use href="#plus"/></svg></button>
<button aria-label="실제 크기"><svg class="i16"><use href="#z100"/></svg></button>
</footer>
</div>
</div>
</body>
</html>
```
FILE: styles.css
```css
* { box-sizing: border-box; }
body {
  margin: 0;
  font: 12px/16px "Noto Sans", "Noto Sans CJK KR", sans-serif;
  color: #1e1e1e;
}
button, input, select { font: inherit; color: inherit; margin: 0; padding: 0; }
button { background: none; border: 0; }
svg { display: block; flex: none; }
i { font-style: normal; flex: none; }
h1, h2 { margin: 0; font-weight: normal; }
.sprite { position: absolute; width: 0; height: 0; }
.i16 { width: 16px; height: 16px; }

.window {
  height: 100vh;
  display: flex;
  flex-direction: column;
  border: 1px solid #86868a;
  padding: 0 6px 5px;
  background: #fff;
}
.titlebar { display: flex; align-items: center; height: 28px; flex: none; padding: 5px 3px 0; gap: 4px; }
.titlebar h1 { flex: 1; font-size: 12px; color: #8a8a8a; }
.window-buttons { display: flex; gap: 20px; padding-right: 6px; }
.window-buttons svg { width: 12px; height: 12px; }

.app {
  flex: 1;
  min-height: 0;
  display: flex;
  flex-direction: column;
  border: 1px solid #868d94;
  background: #eef3f8;
}
.menu { display: flex; flex: none; height: 22px; gap: 14px; padding: 0 8px; font-size: 13px; color: #444; }

/* toolbars */
.toolbar {
  align-self: flex-start;
  flex: none;
  display: flex;
  align-items: center;
  height: 29px;
  padding: 0 2px;
  background: linear-gradient(#fff 40%, #f1f4f7);
  border-bottom: 1px solid #a9b3bf;
  border-radius: 0 3px 3px 0;
}
.toolbar button { display: flex; align-items: center; justify-content: center; width: 24px; height: 22px; }
.toolbar svg, .mini svg, .tab svg { width: 16px; height: 16px; }
.toolbar button.run { width: 52px; gap: 4px; }
.toolbar button.pen { width: 36px; }
.toolbar button.letter { font: bold 15px/20px "Liberation Serif", serif; color: #333; }
.grip { width: 13px; height: 16px; background: radial-gradient(circle, #9aa2ab 1px, transparent 1px) 3px 0 / 4px 4px repeat-y; }
.toolbar .grip:first-child { width: 9px; background-position: 0 0; }
.toolbar .grip.wide:first-child { width: 11px; background-position: 2px 0; }
.toolbar.format .grip:first-child { width: 8px; }
.grip.wide { width: 19px; background-position: 6px 0; }
.sep { width: 1px; height: 14px; margin: 0 3px; background: #cdd3d9; }
.sep.wide { margin: 0 3px 0 6px; }
.toolbar button.on, .mini button.on {
  border: 1px solid #d9a52b;
  border-radius: 3px;
  background: linear-gradient(#fdf3a4, #fbe164);
}
.combo { position: relative; display: flex; width: 50px; height: 20px; }
.combo.spaced { margin-left: 6px; }
.combo.stroke { width: 71px; }
.combo.font { width: 102px; }
.combo select {
  appearance: none;
  width: 100%;
  border: 1px solid #a7afb8;
  border-radius: 0;
  background: linear-gradient(#c3c9d0, #c3c9d0) right 15px top / 1px 100% no-repeat #fff;
  padding-left: 3px;
}
.combo::after {
  content: "";
  position: absolute;
  right: 5px;
  top: 8px;
  border: 3px solid transparent;
  border-top-color: #444;
}
.swatch { position: absolute; left: 6px; top: 5px; width: 22px; height: 10px; border: 1px solid #111; }
.swatch.blue { background: #76b4f6; }
.swatch.black { background: #000; }
.swatch.rule { left: 3px; top: 7px; width: 48px; height: 3px; background: #000; }
.abl { border: 1px solid #999; background: #fff; font-size: 9px; line-height: 12px; height: 15px; width: 16px; }

/* docked panels */
.workspace {
  flex: 1;
  min-height: 0;
  display: grid;
  grid-template-columns: 196px 242px minmax(0, 1fr) 216px;
  gap: 4px;
  padding: 1px 2px 2px;
  border-top: 1px solid #c2cad3;
}
.explorers { display: flex; flex-direction: column; gap: 4px; min-height: 0; }
.panel { display: flex; flex-direction: column; min-height: 0; border: 1px solid #858d96; border-radius: 2px; padding: 0 1px 1px; background: #eef3f8; }
.panel header { display: flex; align-items: center; height: 21px; flex: none; gap: 9px; padding: 0 4px; }
.panel h2 { flex: 1; font-size: 11px; color: #7a828b; }
.panel header svg { width: 10px; height: 10px; }
.tags { height: 182px; flex: none; }
.tree { flex: 1; background: #fff; }
.node { display: flex; align-items: center; height: 28px; padding: 0 0 8px 10px; border-bottom: 1px solid #f0f0f0; }
.node i { width: 12px; border-top: 1px dotted #999; }
.node span { padding-left: 5px; }
.objects { flex: 1; }
.blank { flex: 1; background: #fff; }
.tools { display: flex; gap: 8px; padding: 6px; background: linear-gradient(#fff, #f6f7f9); border-bottom: 1px solid #a3abb4; }
.tools svg { width: 16px; height: 16px; }
.bottom-tabs { display: flex; height: 28px; padding: 0 2px 3px 0; font-size: 11px; background: linear-gradient(#cfd4da, #e6ebf0); }
.bottom-tabs button { flex: 1; text-align: left; padding-left: 12px; }
.bottom-tabs .active { background: #f1f5fa; border: 1px solid #9ba4ae; border-top: 0; padding-left: 9px; }

.mini { display: flex; align-items: center; height: 30px; flex: none; padding: 0 3px; gap: 2px; }
.mini .sep { margin: 0 2px; }
.mini.white { background: linear-gradient(#fff, #f0f4f8); }
.mini button { display: flex; align-items: center; justify-content: center; width: 22px; height: 22px; }
.sheet { flex: 1; min-height: 0; overflow: hidden; background: #fff; border: 1px solid #8f979f; }
.sheet table { width: 100%; border-collapse: collapse; table-layout: fixed; }
.c-gutter { width: 16px; }
.c-name { width: 102px; }
.sheet tr { height: 18px; }
.sheet th, .sheet td { padding: 0; line-height: 17px; border-bottom: 1px solid #e1e5e9; text-align: left; white-space: nowrap; }
.sheet th { font-weight: normal; font-size: 11px; border-left: 1px solid #e1e5e9; padding-left: 18px; color: #505050; }
.sheet td { font-weight: bold; font-size: 13px; color: #000; border-left: 1px solid #e1e5e9; padding-left: 3px; }
.sheet td:first-child { border: 0; padding: 0; }
.sheet .cat th { border-left: 0; padding: 0 6px 0 3px; }
.sheet .cat svg { float: right; width: 10px; height: 10px; margin-top: 4px; }
.color { display: inline-block; width: 22px; height: 10px; margin: 0 4px 0 2px; border: 1px solid #111; background: #f5f5f5; }
.splitter { height: 7px; flex: none; display: flex; align-items: center; justify-content: center; }
.splitter i { width: 16px; height: 2px; background: repeating-linear-gradient(90deg, #8b939c 0 2px, transparent 2px 4px); }
.describe { height: 60px; flex: none; border: 1px solid #8f979f; }

/* page editor */
.editor { display: flex; flex-direction: column; min-width: 0; min-height: 0; margin-right: 2px; padding-bottom: 1px; border: 1px solid #8f979f; border-top: 0; background: #eef3f8; }
.tabs { display: flex; height: 22px; flex: none; padding-left: 1px; border-bottom: 1px solid #a3abb4; }
.tab { display: flex; align-items: center; gap: 6px; height: 21px; padding: 0 6px; font-size: 11px; border: 1px solid #9ba4ae; border-bottom: 0; border-left: 0; background: linear-gradient(#e3e8ed, #cbd2d9); }
.tab.active { height: 22px; padding-left: 9px; background: #fff; border: 1px solid #c2cad3; border-bottom: 0; }
.arrows { margin-left: auto; display: flex; align-items: center; gap: 6px; padding-right: 3px; }
.arrows svg { width: 10px; height: 10px; }
.stage { flex: 1; min-height: 0; display: grid; grid-template: minmax(0, 1fr) 17px / minmax(0, 1fr) 16px; background: #f1f1f1; }
.view { overflow: hidden; padding: 10px 0 0 9px; background: #d6d9db; }
.page {
  height: 100%;
  border: solid #000;
  border-width: 1px 0 0 1px;
  background:
    linear-gradient(#e2e3e5 1px, transparent 1px) 0 9px / 10px 10px,
    linear-gradient(90deg, #e2e3e5 1px, transparent 1px) 9px 0 / 10px 10px,
    #fbfbfb;
}
.vbar, .hbar { display: flex; align-items: center; background: #f1f1f1; }
.vbar { flex-direction: column; width: 15px; }
.vbar svg, .hbar svg { width: 10px; height: 10px; margin: 4px; }
.hbar svg { margin: 3px; }
.vbar .track { flex: 1; width: 15px; }
.hbar .track { flex: 1; height: 15px; }
.track i { display: block; background: #cdcdcd; }
.vbar .track i { width: 15px; height: 87%; }
.hbar .track i { height: 15px; width: 51%; }

/* symbol library */
.path { display: flex; flex: none; height: 23px; padding-bottom: 2px; }
.path input { flex: 1; min-width: 0; border: 1px solid #333; padding: 0 3px; background: #fff; }
.path button { width: 26px; border: 1px solid #bdc5ce; border-left: 0; background: #f8fafc; }
.browse { flex: 1; min-height: 0; display: flex; background: repeating-conic-gradient(#f6f6f6 0 25%, #fff 0 50%) 0 0 / 16px 16px; }
.browse ul { flex: 1; margin: 0; padding: 1px 0 0; list-style: none; overflow: hidden; }
.browse li { width: 104px; height: 107px; padding-top: 9px; text-align: center; }
.browse li svg { width: 38px; height: 56px; margin: 0 0 4px 31px; }
.browse li.parent { padding-top: 7px; }
.browse li.parent svg { width: 54px; height: 60px; }
.browse .vbar .track i { height: 14%; }

.status {
  flex: none;
  display: flex;
  align-items: center;
  justify-content: flex-end;
  height: 27px;
  padding: 0 7px 1px;
  border-top: 1px solid #868d94;
  background: linear-gradient(#eceff2, #bec4ca);
  color: #555;
}
.status .size { border: solid #b0b7be; border-width: 0 1px; padding: 0 23px 0 8px; margin-right: 9px; }
.status label { padding-right: 5px; }
.status svg { width: 18px; height: 18px; }
.status svg.i16 { width: 16px; height: 16px; }
.status input {
  appearance: none;
  width: 157px;
  height: 16px;
  margin: 0 4px 0 5px;
  background: linear-gradient(90deg, #8fb3d9, #5d83ad 50%, #a4aeb8) center / 100% 2px no-repeat;
}
.status input::-webkit-slider-thumb { appearance: none; width: 9px; height: 14px; border: 1px solid #d2b868; border-radius: 2px; background: #ffeaa4; }
.status button + button { margin-left: 5px; }
```
